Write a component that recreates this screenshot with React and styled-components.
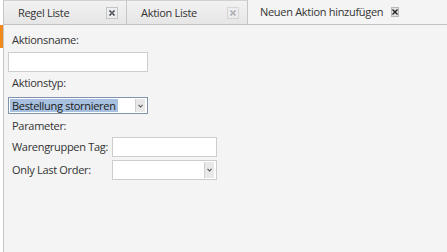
import React from "react";
import styled, { createGlobalStyle } from "styled-components";

const Global = createGlobalStyle`
  html, body { margin: 0; padding: 0; background: #f4f4f4; }
  body { font-family: "Open Sans", "Noto Sans", sans-serif; font-size: 11px; letter-spacing: -0.3px; color: #333; }
  * { box-sizing: border-box; }
`;

const Page = styled.div`
  display: flex;
  width: 447px;
  height: 252px;
  overflow: hidden;
  background: #f4f4f4;
`;

const Rail = styled.div`
  width: 4px;
  flex: none;
  display: flex;
  flex-direction: column;
  background: #ffffff;
  border-right: 1px solid #c6c6c6;
`;

const RailMark = styled.div`
  margin-top: 25px;
  width: 3px;
  height: 23px;
  background: #f08a1c;
`;

const Main = styled.div`
  flex: 1;
  display: flex;
  flex-direction: column;
  min-width: 0;
`;

const TabBar = styled.div`
  display: flex;
  height: 25px;
  border-bottom: 1px solid #c2c2c2;
  background: #f4f4f4;
`;

const Tab = styled.div`
  display: flex;
  align-items: center;
  height: 24px;
  width: ${(p) => p.$w}px;
  padding: 0 8px 0 ${(p) => (p.$active ? 12 : 14)}px;
  gap: 8px;
  white-space: nowrap;
  border-top: ${(p) => (p.$active ? "none" : "1px solid #d0d0d0")};
  border-right: 1px solid ${(p) => (p.$active ? "transparent" : "#c6c6c6")};
  background: ${(p) =>
    p.$active ? "#f4f4f4" : "linear-gradient(#f2f2f2, #e6e6e6)"};
  color: #333;
`;

const TabLabel = styled.span`
  flex: ${(p) => (p.$active ? "none" : "1")};
  line-height: 14px;
`;

const Close = styled.span`
  display: flex;
  align-items: center;
  justify-content: center;
  width: ${(p) => (p.$small ? 11 : 12)}px;
  height: ${(p) => (p.$small ? 10 : 12)}px;
  border: 1px solid ${(p) => (p.$small ? "#b8b8b8" : "#c4c4c4")};
  background: ${(p) => (p.$small ? "#e2e2e2" : "#eeeeee")};
  opacity: ${(p) => (p.$faded ? 0.55 : 1)};
`;

const XIcon = ({ color = "#20324f", accent = "#e08a3a" }) => (
  <svg width="6" height="6" viewBox="0 0 6 6">
    <path d="M0.5 0.5 L5.5 5.5 M5.5 0.5 L0.5 5.5" stroke={color} strokeWidth="1.4" />
    <rect x="2.3" y="2.3" width="1.4" height="1.4" fill={accent} />
  </svg>
);

const Form = styled.div`
  display: flex;
  flex-direction: column;
  padding: 8px 0 0 4px;
`;

const Label = styled.div`
  line-height: 14px;
  padding-left: 4px;
  margin-top: ${(p) => p.$mt || 0}px;
  color: #333;
`;

const TextInput = styled.div`
  width: ${(p) => p.$w}px;
  height: 20px;
  margin-top: ${(p) => p.$mt || 0}px;
  background: #fff;
  border: 1px solid #cdcdcd;
`;

const Select = styled.div`
  display: flex;
  align-items: stretch;
  width: ${(p) => p.$w}px;
  height: ${(p) => p.$h}px;
  margin-top: ${(p) => p.$mt || 0}px;
  background: #fff;
  border: 1px solid ${(p) => (p.$focus ? "#7f93ad" : "#cdcdcd")};
  padding: 1px;
`;

const SelectValue = styled.div`
  flex: 1;
  display: flex;
  align-items: center;
`;

const Highlight = styled.span`
  background: #a8c0df;
  color: #1a1a1a;
  padding: 0 2px;
  line-height: 13px;
`;

const Arrow = styled.div`
  width: 10px;
  display: flex;
  align-items: center;
  justify-content: center;
  background: #e8e8e8;
  border-left: 1px solid #d0d0d0;
  margin-right: 1px;
`;

const Chevron = () => (
  <svg width="5" height="4" viewBox="0 0 5 4">
    <path d="M0.5 0.8 L2.5 3 L4.5 0.8" stroke="#555" strokeWidth="1.1" fill="none" />
  </svg>
);

const ParamGrid = styled.div`
  display: grid;
  grid-template-columns: 104px 105px;
  row-gap: 3px;
  align-items: center;
  margin-top: 4px;
`;

const ParamLabel = styled.div`
  padding-left: 4px;
  line-height: 14px;
  white-space: nowrap;
  color: #333;
`;

export default function App() {
  return (
    <>
      <Global />
      <Page>
        <Rail>
          <RailMark />
        </Rail>
        <Main>
          <TabBar>
            <Tab $w={123}>
              <TabLabel>Regel Liste</TabLabel>
              <Close>
                <XIcon />
              </Close>
            </Tab>
            <Tab $w={121}>
              <TabLabel>Aktion Liste</TabLabel>
              <Close $faded>
                <XIcon color="#5a6a86" accent="#c8a060" />
              </Close>
            </Tab>
            <Tab $w={160} $active>
              <TabLabel $active>Neuen Aktion hinzufügen</TabLabel>
              <Close $small>
                <XIcon color="#222" accent="#222" />
              </Close>
            </Tab>
          </TabBar>
          <Form>
            <Label>Aktionsname:</Label>
            <TextInput $w={140} $mt={5} />
            <Label $mt={4}>Aktionstyp:</Label>
            <Select $w={140} $h={17} $mt={7} $focus>
              <SelectValue>
                <Highlight>Bestellung stornieren</Highlight>
              </SelectValue>
              <Arrow>
                <Chevron />
              </Arrow>
            </Select>
            <Label $mt={5}>Parameter:</Label>
            <ParamGrid>
              <ParamLabel>Warengruppen Tag:</ParamLabel>
              <TextInput $w={105} />
              <ParamLabel>Only Last Order:</ParamLabel>
              <Select $w={105} $h={20}>
                <SelectValue />
                <Arrow>
                  <Chevron />
                </Arrow>
              </Select>
            </ParamGrid>
          </Form>
        </Main>
      </Page>
    </>
  );
}
